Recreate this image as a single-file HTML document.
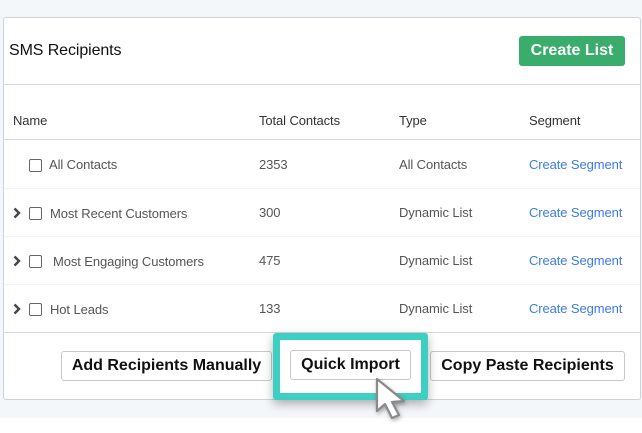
<!DOCTYPE html>
<html><head><style>
body{margin:0;width:642px;height:433px;background:#fff;position:relative;overflow:hidden;font-family:"Liberation Sans",sans-serif}
.bg{position:absolute;left:0;top:0;width:642px;height:418px;background:#f4f7fa}
.card{position:absolute;left:3px;top:17px;width:636px;height:381px;background:#fff;border:1px solid #cfd3d8;border-radius:3px}
.t{position:absolute;font-size:13px;color:#555;white-space:nowrap;letter-spacing:-0.1px}
.h{color:#333}
.line{position:absolute;left:0;width:636px;height:1px;background:#d5d8dc}
.cb{position:absolute;width:11px;height:11px;border:1px solid #666;border-radius:2px;background:#fff}
.ch{position:absolute;width:8px;height:12px}
.link{color:#3b7be8}
.btn{position:absolute;height:30px;border:1px solid #c8c8c8;border-radius:3px;background:#fff;font-weight:bold;font-size:16px;color:#111;text-align:center;line-height:28px;box-sizing:border-box}
</style></head><body>
<div class="bg"></div>
<div class="card">
<div class="t" style="left:5px;top:24px;font-size:16px;color:#111">SMS Recipients</div>
<div style="position:absolute;left:515px;top:18px;width:106px;height:30px;background:#3aac6b;border-radius:3px;color:#fff;font-weight:bold;font-size:16px;text-align:center;line-height:30px">Create List</div>
<div class="line" style="top:66px"></div>
<div class="t h" style="left:9px;top:95px">Name</div>
<div class="t h" style="left:255px;top:95px">Total Contacts</div>
<div class="t h" style="left:395px;top:95px">Type</div>
<div class="t h" style="left:525px;top:95px">Segment</div>
<div class="line" style="top:121px"></div>

<div class="cb" style="left:25px;top:141px"></div>
<div class="t" style="left:45px;top:139px">All Contacts</div>
<div class="t" style="left:255px;top:139px">2353</div>
<div class="t" style="left:395px;top:139px">All Contacts</div>
<div class="t link" style="left:525px;top:139px">Create Segment</div>
<div class="line" style="top:170px;background:#f3f3f3"></div>

<svg class="ch" style="left:9px;top:189px" viewBox="0 0 8 12"><path d="M1.5 1.5 L6 6 L1.5 10.5" fill="none" stroke="#444" stroke-width="2.4"/></svg>
<div class="cb" style="left:25px;top:189px"></div>
<div class="t" style="left:46px;top:188px">Most Recent Customers</div>
<div class="t" style="left:255px;top:187px">300</div>
<div class="t" style="left:395px;top:187px">Dynamic List</div>
<div class="t link" style="left:525px;top:187px">Create Segment</div>
<div class="line" style="top:218px;background:#f3f3f3"></div>

<svg class="ch" style="left:9px;top:237px" viewBox="0 0 8 12"><path d="M1.5 1.5 L6 6 L1.5 10.5" fill="none" stroke="#444" stroke-width="2.4"/></svg>
<div class="cb" style="left:25px;top:237px"></div>
<div class="t" style="left:49px;top:236px">Most Engaging Customers</div>
<div class="t" style="left:255px;top:235px">475</div>
<div class="t" style="left:395px;top:235px">Dynamic List</div>
<div class="t link" style="left:525px;top:235px">Create Segment</div>
<div class="line" style="top:266px;background:#f3f3f3"></div>

<svg class="ch" style="left:9px;top:285px" viewBox="0 0 8 12"><path d="M1.5 1.5 L6 6 L1.5 10.5" fill="none" stroke="#444" stroke-width="2.4"/></svg>
<div class="cb" style="left:25px;top:285px"></div>
<div class="t" style="left:46px;top:284px">Hot Leads</div>
<div class="t" style="left:255px;top:283px">133</div>
<div class="t" style="left:395px;top:283px">Dynamic List</div>
<div class="t link" style="left:525px;top:283px">Create Segment</div>
<div class="line" style="top:314px"></div>

<div class="btn" style="left:57px;top:333px;width:211px">Add Recipients Manually</div>
<div class="btn" style="left:426px;top:333px;width:195px">Copy Paste Recipients</div>
</div>
<div style="position:absolute;left:273px;top:333px;width:155px;height:67px;box-sizing:border-box;border:7px solid #3ecfc3;border-radius:3px;background:#fff;box-shadow:0 4px 10px rgba(0,0,0,.3)"></div>
<div class="btn" style="left:290px;top:350px;width:121px">Quick Import</div>
<svg style="position:absolute;left:372px;top:375px" width="42" height="48" viewBox="0 0 42 48">
<path d="M5 4 L5 36 L13 29 L20 43 L27 40 L20 27 L32 26 Z" fill="#fff" stroke="#8a8a8a" stroke-width="2.2" stroke-linejoin="round" style="filter:drop-shadow(1px 2px 2px rgba(0,0,0,.3))"/>
</svg>
</body></html>
